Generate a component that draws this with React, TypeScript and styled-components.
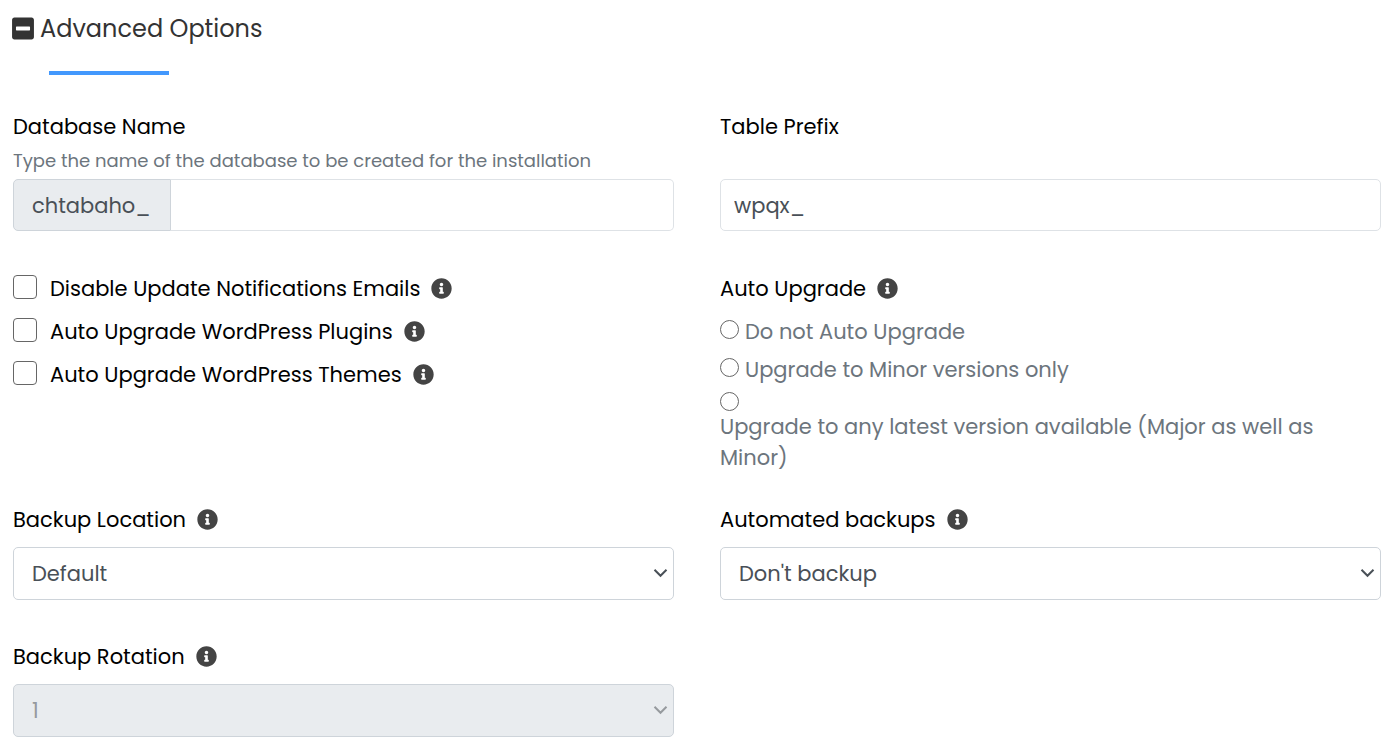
import React, { useState } from "react";
import styled, { createGlobalStyle } from "styled-components";
import { FaInfoCircle, FaMinusSquare } from "react-icons/fa";

const GlobalStyle = createGlobalStyle`
  *, *::before, *::after { box-sizing: border-box; }
  body {
    margin: 0;
    background: #fff;
    color: #000;
    font-family: Poppins, Inter, "Liberation Sans", sans-serif;
    font-size: 21px;
    font-weight: 400;
    line-height: 31px;
  }
  input, select, button { font: inherit; }
`;

const Panel = styled.form`
  padding: 12px 9px 8px 13px;
`;

const Heading = styled.h2`
  margin: 0;
  font-size: 24px;
  font-weight: 400;
  line-height: 33px;
`;

const Toggle = styled.button`
  display: flex;
  align-items: center;
  gap: 6px;
  padding: 0;
  border: 0;
  background: none;
  color: #333;
  cursor: pointer;

  svg {
    width: 22px;
    height: 25px;
    margin-left: -1px;
  }
`;

const Underline = styled.div`
  width: 120px;
  height: 4px;
  margin: 26px 0 36px 36px;
  background: #4298fd;
`;

const Grid = styled.div`
  display: grid;
  grid-template-columns: 1fr 1fr;
  column-gap: 46px;
`;

const Cell = styled.div<{ $bottom: number }>`
  display: flex;
  flex-direction: column;
  min-width: 0;
  padding-bottom: ${(p) => p.$bottom}px;
`;

const LabelRow = styled.div`
  display: flex;
  align-items: center;
  gap: 11px;
`;

const Info = styled.button`
  display: flex;
  padding: 0;
  border: 0;
  background: none;
  color: #444;
  cursor: help;

  svg {
    width: 21px;
    height: 21px;
  }
`;

const Hint = styled.small`
  margin: 5px 0;
  color: #6c757d;
  font-size: 18px;
  line-height: 27px;
`;

const InputGroup = styled.div`
  display: flex;
  height: 52px;
  margin-top: auto;
`;

const Prefix = styled.span`
  display: flex;
  align-items: center;
  padding: 0 19px 0 18px;
  border: 1px solid #ced4da;
  border-radius: 5px 0 0 5px;
  background: #e9ecef;
  color: #495057;
`;

const TextInput = styled.input<{ $joined?: boolean }>`
  flex: 1;
  min-width: 0;
  padding: 0 13px;
  border: 1px solid #dee2e6;
  border-left-width: ${(p) => (p.$joined ? 0 : 1)}px;
  border-radius: ${(p) => (p.$joined ? "0 5px 5px 0" : "5px")};
  background: #fff;
  color: #495057;
`;

const CheckRow = styled(LabelRow)`
  margin-bottom: 12px;

  label {
    display: flex;
    align-items: center;
    gap: 13px;
  }
`;

const CheckBox = styled.input`
  appearance: none;
  width: 24px;
  height: 24px;
  margin: 0 0 4px;
  border: 1px solid #666;
  border-radius: 4px;
  background: #fff;

  &:checked {
    background: #4298fd;
  }
`;

const RadioList = styled.fieldset`
  display: flex;
  flex-direction: column;
  gap: 7px;
  margin: 12px 0 0;
  padding: 0;
  border: 0;
  color: #6c757d;
`;

const RadioLabel = styled.label<{ $stacked?: boolean }>`
  display: flex;
  flex-direction: ${(p) => (p.$stacked ? "column" : "row")};
  align-items: ${(p) => (p.$stacked ? "flex-start" : "center")};
  gap: ${(p) => (p.$stacked ? 0 : 6)}px;
  padding-right: 40px;
`;

const Radio = styled.input<{ $stacked?: boolean }>`
  appearance: none;
  flex: none;
  width: 19px;
  height: 19px;
  margin: 0 0 ${(p) => (p.$stacked ? 0 : 4)}px;
  border: 1px solid #666;
  border-radius: 50%;
  background: #fff;

  &:checked {
    background: #4298fd;
  }
`;

const SelectBox = styled.div`
  position: relative;
  margin-top: 12px;

  svg {
    position: absolute;
    top: 21px;
    right: 6px;
    pointer-events: none;
  }
`;

const Select = styled.select`
  appearance: none;
  display: block;
  width: 100%;
  height: 53px;
  padding: 0 36px 0 18px;
  border: 1px solid #ced4da;
  border-radius: 5px;
  background: #fff;
  color: #495057;
  opacity: 1;

  &:disabled {
    background: #e9ecef;
    color: #969a9e;
  }
`;

function InfoButton({ about }: { about: string }) {
  return (
    <Info type="button" aria-label={`About ${about}`}>
      <FaInfoCircle />
    </Info>
  );
}

interface SelectFieldProps {
  id: string;
  label: string;
  options: string[];
  bottom: number;
  disabled?: boolean;
}

function SelectField({ id, label, options, bottom, disabled }: SelectFieldProps) {
  return (
    <Cell $bottom={bottom}>
      <LabelRow>
        <label htmlFor={id}>{label}</label>
        <InfoButton about={label} />
      </LabelRow>
      <SelectBox>
        <Select id={id} disabled={disabled}>
          {options.map((o) => (
            <option key={o}>{o}</option>
          ))}
        </Select>
        <svg width="15" height="10" viewBox="0 0 15 10" fill="none" aria-hidden="true">
          <path d="M1.5 1.8 L7.5 7.8 L13.5 1.8" stroke={disabled ? "#969a9e" : "#495057"} strokeWidth="2" />
        </svg>
      </SelectBox>
    </Cell>
  );
}

const toggles = [
  "Disable Update Notifications Emails",
  "Auto Upgrade WordPress Plugins",
  "Auto Upgrade WordPress Themes",
];

const upgradeModes = [
  { text: "Do not Auto Upgrade" },
  { text: "Upgrade to Minor versions only" },
  { text: "Upgrade to any latest version available (Major as well as Minor)", stacked: true },
];

export default function App() {
  const [open, setOpen] = useState(true);
  return (
    <>
      <GlobalStyle />
      <Panel>
        <Heading>
          <Toggle type="button" aria-expanded={open} onClick={() => setOpen(!open)}>
            <FaMinusSquare />
            Advanced Options
          </Toggle>
        </Heading>
        <Underline />
        {open && (
          <Grid>
            <Cell $bottom={42}>
              <label htmlFor="database">Database Name</label>
              <Hint id="database-hint">Type the name of the database to be created for the installation</Hint>
              <InputGroup>
                <Prefix>chtabaho_</Prefix>
                <TextInput id="database" aria-describedby="database-hint" $joined />
              </InputGroup>
            </Cell>
            <Cell $bottom={42}>
              <label htmlFor="prefix">Table Prefix</label>
              <InputGroup>
                <TextInput id="prefix" defaultValue="wpqx_" />
              </InputGroup>
            </Cell>

            <Cell $bottom={31}>
              {toggles.map((t, i) => (
                <CheckRow key={t}>
                  <label htmlFor={`toggle-${i}`}>
                    <CheckBox id={`toggle-${i}`} type="checkbox" />
                    {t}
                  </label>
                  <InfoButton about={t} />
                </CheckRow>
              ))}
            </Cell>
            <Cell $bottom={31}>
              <LabelRow>
                <span id="auto-upgrade">Auto Upgrade</span>
                <InfoButton about="Auto Upgrade" />
              </LabelRow>
              <RadioList aria-labelledby="auto-upgrade">
                {upgradeModes.map((m) => (
                  <RadioLabel key={m.text} $stacked={m.stacked}>
                    <Radio type="radio" name="auto-upgrade" $stacked={m.stacked} />
                    {m.text}
                  </RadioLabel>
                ))}
              </RadioList>
            </Cell>

            <SelectField id="location" label="Backup Location" options={["Default"]} bottom={41} />
            <SelectField id="backups" label="Automated backups" options={["Don't backup"]} bottom={41} />
            <SelectField id="rotation" label="Backup Rotation" options={["1"]} bottom={0} disabled />
          </Grid>
        )}
      </Panel>
    </>
  );
}
